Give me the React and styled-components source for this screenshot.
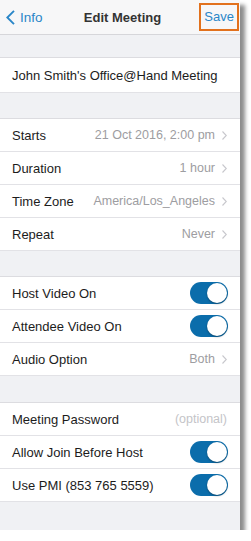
import React from "react";
import styled, { createGlobalStyle } from "styled-components";

const GlobalStyle = createGlobalStyle`
  html, body {
    margin: 0;
    padding: 0;
    background: #ffffff;
    font-family: "Liberation Sans", Arial, sans-serif;
  }
`;

const Phone = styled.div`
  width: 240px;
  height: 530px;
  background: #f0f1f4;
  box-shadow: 5px 5px 4px rgba(0, 0, 0, 0.45);
  display: flex;
  flex-direction: column;
  overflow: hidden;
`;

const NavBar = styled.div`
  height: 34px;
  background: #f7f7f8;
  border-bottom: 1px solid #d6d6da;
  display: grid;
  grid-template-columns: 1fr auto 1fr;
  align-items: center;
  padding: 0 1px 0 6px;
`;

const BackButton = styled.div`
  display: flex;
  align-items: center;
  gap: 5px;
  color: #2a86c8;
  font-size: 13.5px;
`;

const Title = styled.div`
  font-size: 13px;
  font-weight: bold;
  color: #333;
`;

const SaveBox = styled.div`
  justify-self: end;
  border: 2.5px solid #e2711d;
  color: #2a86c8;
  font-size: 13px;
  padding: 4px 3px 5px 3px;
`;

const Gap = styled.div`
  height: ${(p) => p.h}px;
`;

const Group = styled.div`
  background: #ffffff;
  border-top: 1px solid #dcdce0;
`;

const Row = styled.div`
  height: ${(p) => p.h || 32}px;
  display: flex;
  align-items: center;
  justify-content: space-between;
  padding: 0 13px 0 12px;
  border-bottom: 1px solid #e2e2e6;
  font-size: 13px;
  color: #1c1c1c;
`;

const Value = styled.div`
  display: flex;
  align-items: center;
  gap: 7px;
  color: ${(p) => (p.light ? "#c4c4c8" : "#9d9da1")};
  font-size: 12.5px;
`;

const Toggle = styled.div`
  width: 38px;
  height: 22px;
  border-radius: 12px;
  background: #0b6dab;
  display: flex;
  align-items: center;
  justify-content: flex-end;
  padding: 1px;
  margin-right: -1px;
  box-sizing: border-box;
`;

const Knob = styled.div`
  width: 20px;
  height: 20px;
  border-radius: 50%;
  background: #fff;
  box-shadow: 0 1px 2px rgba(0, 0, 0, 0.35);
`;

const Chevron = () => (
  <svg width="5" height="9" viewBox="0 0 5 9">
    <path d="M0.5 0.5 L4.3 4.5 L0.5 8.5" fill="none" stroke="#c7c7cc" strokeWidth="1.1" />
  </svg>
);

const BackChevron = () => (
  <svg width="9" height="15" viewBox="0 0 9 15">
    <path d="M8 0.8 L1.3 7.5 L8 14.2" fill="none" stroke="#2a86c8" strokeWidth="1.9" />
  </svg>
);

const Switch = () => (
  <Toggle>
    <Knob />
  </Toggle>
);

const NavRow = ({ label, value }) => (
  <Row>
    <span>{label}</span>
    <Value>
      {value}
      <Chevron />
    </Value>
  </Row>
);

const SwitchRow = ({ label }) => (
  <Row>
    <span>{label}</span>
    <Switch />
  </Row>
);

export default function App() {
  return (
    <>
      <GlobalStyle />
      <Phone>
        <NavBar>
          <BackButton>
            <BackChevron />
            Info
          </BackButton>
          <Title>Edit Meeting</Title>
          <SaveBox>Save</SaveBox>
        </NavBar>
        <Gap h={22} />
        <Group>
          <Row h={34}>John Smith's Office@Hand Meeting</Row>
        </Group>
        <Gap h={25} />
        <Group>
          <NavRow label="Starts" value="21 Oct 2016, 2:00 pm" />
          <NavRow label="Duration" value="1 hour" />
          <NavRow label="Time Zone" value="America/Los_Angeles" />
          <NavRow label="Repeat" value="Never" />
        </Group>
        <Gap h={25} />
        <Group>
          <SwitchRow label="Host Video On" />
          <SwitchRow label="Attendee Video On" />
          <NavRow label="Audio Option" value="Both" />
        </Group>
        <Gap h={26} />
        <Group>
          <Row>
            <span>Meeting Password</span>
            <Value light>(optional)</Value>
          </Row>
          <SwitchRow label="Allow Join Before Host" />
          <SwitchRow label="Use PMI (853 765 5559)" />
        </Group>
      </Phone>
    </>
  );
}
